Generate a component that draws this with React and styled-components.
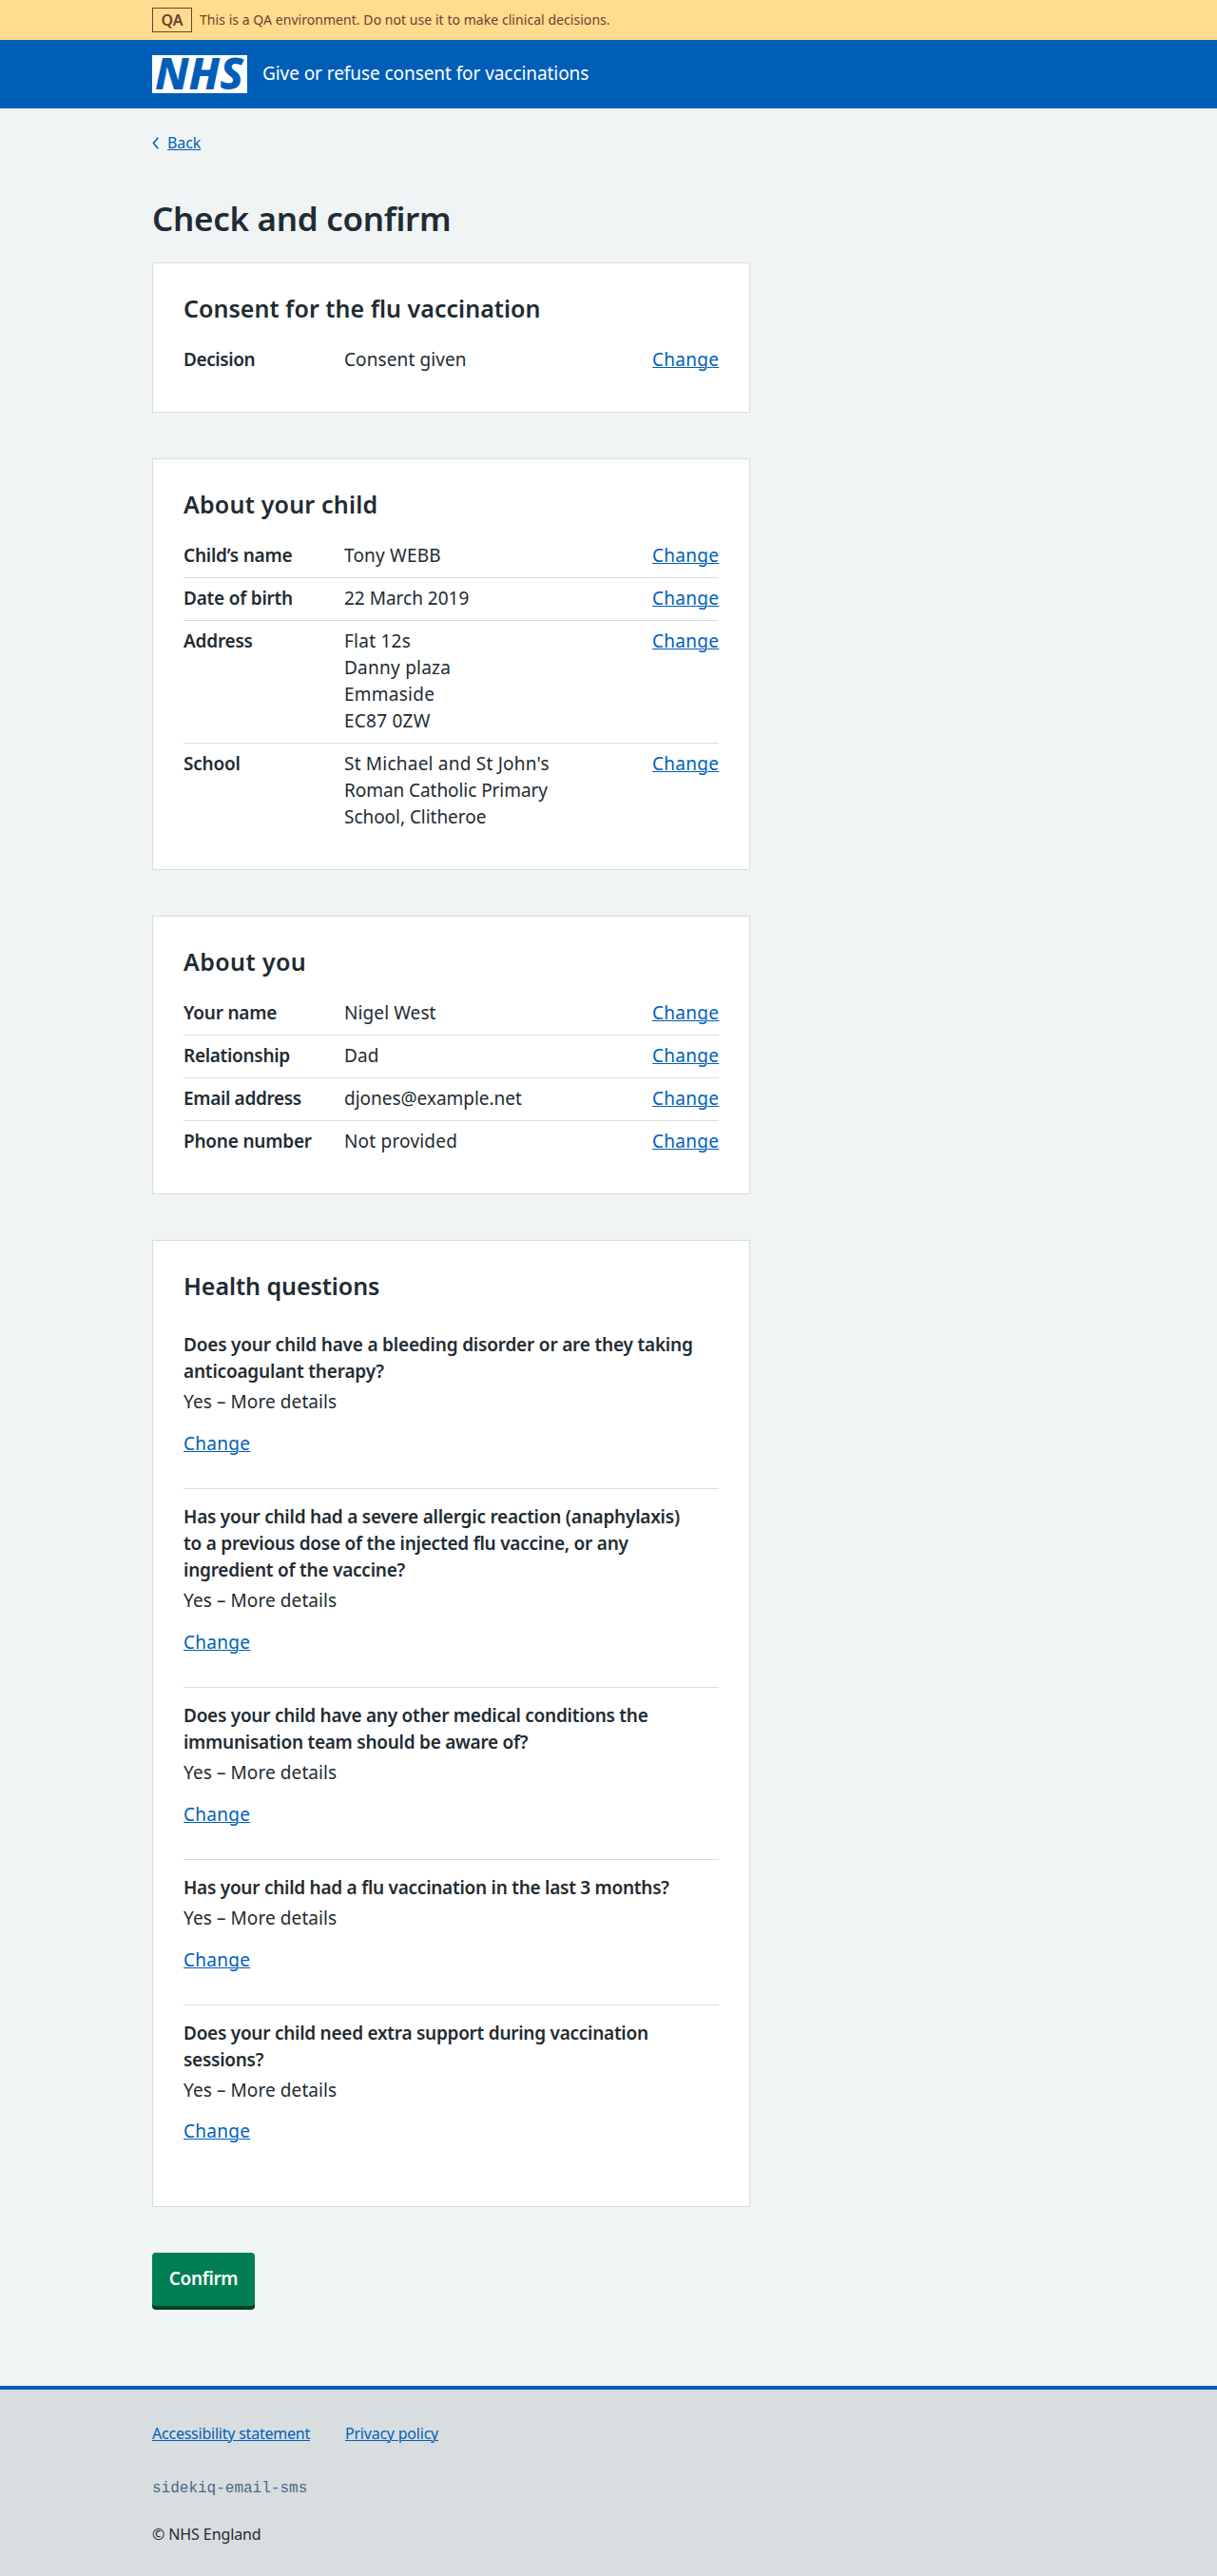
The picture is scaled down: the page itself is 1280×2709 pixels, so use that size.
import React from 'react';
import styled, { createGlobalStyle, css } from 'styled-components';

const color = {
  blue: '#005eb8',
  text: '#212b32',
  secondary: '#4a6785',
  border: '#d8dde0',
  page: '#f0f4f5',
  white: '#ffffff',
  green: '#007f52',
  greenShadow: '#00401e',
  yellow: '#ffdc8e',
  brown: '#6a4032',
};

const GlobalStyle = createGlobalStyle`
  *, *::before, *::after { box-sizing: border-box; }
  body {
    margin: 0;
    background: ${color.page};
    color: ${color.text};
    font-family: 'Noto Sans', 'Open Sans', Arial, sans-serif;
    font-size: 19px;
    line-height: 28px;
  }
  h1, h2, p, dl, dt, dd, ul { margin: 0; padding: 0; }
`;

const tracking = css`
  letter-spacing: ${({ $track = 0 }) => $track}px;
`;

const Container = styled.div`
  width: 960px;
  margin: 0 auto;
`;

const Banner = styled.div`
  height: 42px;
  background: ${color.yellow};
  color: ${color.brown};
`;

const BannerRow = styled(Container)`
  display: flex;
  align-items: center;
  height: 100%;
  gap: 8px;
`;

const Tag = styled.strong`
  width: 42px;
  height: 26px;
  border: 1px solid ${color.brown};
  font-size: 16px;
  font-weight: 600;
  line-height: 24px;
  text-align: center;
`;

const BannerText = styled.span`
  font-size: 14px;
  line-height: 20px;
  letter-spacing: 0.05px;
`;

const Header = styled.header`
  background: ${color.blue};
  color: ${color.white};
`;

const HeaderRow = styled(Container)`
  display: flex;
  align-items: center;
  height: 72px;
  gap: 16px;
`;

const Logo = styled.svg`
  display: block;
  width: 100px;
  height: 40px;
  overflow: visible;
  background: ${color.white};
`;

const LogoText = styled.text`
  fill: ${color.blue};
  font-family: 'Noto Sans', 'Open Sans', Arial, sans-serif;
  font-size: 45.5px;
  font-style: italic;
  font-weight: 800;
`;

const ServiceName = styled.span`
  padding-bottom: 2px;
  letter-spacing: -0.07px;
`;

const Link = styled.a.attrs({ href: '#' })`
  color: ${color.blue};
  text-decoration: underline;
  text-decoration-thickness: 1px;
  text-underline-offset: 1px;
  letter-spacing: ${({ $track = 0.28 }) => $track}px;
`;

const Main = styled.main`
  padding: 24px 0 84px;
`;

const BackRow = styled.div`
  display: flex;
  align-items: center;
  height: 24px;
  gap: 9px;
  font-size: 16px;
  line-height: 24px;
`;

const Chevron = styled.svg`
  display: block;
  width: 7px;
  height: 13px;
`;

const Column = styled.div`
  width: 629.33px;
  padding-top: 44px;
`;

const PageTitle = styled.h1`
  margin-bottom: 22px;
  font-size: 35px;
  font-weight: 600;
  line-height: 48px;
  letter-spacing: -0.3px;
`;

const Card = styled.section`
  margin-bottom: 48px;
  padding: 31px 32px 32px;
  border: 1px solid ${color.border};
  background: ${color.white};
`;

const CardTitle = styled.h2`
  margin-bottom: 17px;
  font-size: 25px;
  font-weight: 600;
  line-height: 32px;
  ${tracking}
`;

const SummaryRow = styled.div`
  display: grid;
  grid-template-columns: 30% 50% 20%;
  padding: 7px 0 9px;
  border-bottom: 1px solid ${color.border};

  &:last-child {
    border-bottom: 0;
  }
`;

const Key = styled.dt`
  font-weight: 600;
  ${tracking}
`;

const Value = styled.dd`
  display: flex;
  flex-direction: column;
`;

const ValueLine = styled.span`
  ${tracking}
`;

const Action = styled.dd`
  display: flex;
  justify-content: flex-end;
`;

const Question = styled.div`
  padding: 15px 24px 33px 0;
  border-bottom: 1px solid ${color.border};

  &:last-child {
    border-bottom: 0;
  }
`;

const QuestionAction = styled.dd`
  margin-top: 16px;

  ${Question}:last-child & {
    margin-top: 15px;
  }
`;

const Answer = styled.dd`
  margin-top: 4px;
  letter-spacing: 0.09px;
`;

const Button = styled.button`
  display: block;
  width: 108px;
  height: 56px;
  margin: 0;
  padding: 13px 0 15px;
  border: 0;
  border-radius: 4px;
  background: ${color.green};
  box-shadow: 0 4px 0 ${color.greenShadow};
  color: ${color.white};
  font: 600 19px/28px 'Noto Sans', 'Open Sans', Arial, sans-serif;
  letter-spacing: -0.35px;
`;

const Footer = styled.footer`
  padding: 34px 0 32px;
  border-top: 4px solid ${color.blue};
  background: ${color.border};
  font-size: 16px;
  line-height: 24px;
`;

const FooterLinks = styled.div`
  display: flex;
  gap: 37px;
  margin-bottom: 34px;
`;

const Version = styled.p`
  margin-bottom: 24px;
  color: ${color.secondary};
  font-family: 'Liberation Mono', monospace;
`;

const Copyright = styled.p`
  letter-spacing: -0.1px;
`;

const summaries = [
  {
    title: 'Consent for the flu vaccination',
    track: 0.03,
    rows: [{ key: 'Decision', keyTrack: -0.4, lines: ['Consent given'] }],
  },
  {
    title: 'About your child',
    track: 0.2,
    rows: [
      { key: 'Child’s name', lines: ['Tony WEBB'], valueTrack: 0.2 },
      { key: 'Date of birth', lines: ['22 March 2019'], valueTrack: 0 },
      { key: 'Address', lines: ['Flat 12s', 'Danny plaza', 'Emmaside', 'EC87 0ZW'], valueTrack: 0.25 },
      {
        key: 'School',
        lines: ["St Michael and St John's", 'Roman Catholic Primary', 'School, Clitheroe'],
        valueTrack: [0.22, -0.06, -0.04],
      },
    ],
  },
  {
    title: 'About you',
    track: 0.4,
    rows: [
      { key: 'Your name', lines: ['Nigel West'] },
      { key: 'Relationship', keyTrack: -0.3, lines: ['Dad'] },
      { key: 'Email address', keyTrack: -0.34, lines: ['djones@example.net'], valueTrack: -0.02 },
      { key: 'Phone number', lines: ['Not provided'], valueTrack: 0.2 },
    ],
  },
];

const questions = [
  { text: 'Does your child have a bleeding disorder or are they taking anticoagulant therapy?', track: -0.19 },
  {
    text: 'Has your child had a severe allergic reaction (anaphylaxis) to a previous dose of the injected flu vaccine, or any ingredient of the vaccine?',
    track: -0.23,
  },
  { text: 'Does your child have any other medical conditions the immunisation team should be aware of?', track: -0.26 },
  { text: 'Has your child had a flu vaccination in the last 3 months?', track: -0.26 },
  { text: 'Does your child need extra support during vaccination sessions?', track: -0.26 },
];

function SummaryCard({ title, track, rows }) {
  return (
    <Card>
      <CardTitle $track={track}>{title}</CardTitle>
      <dl>
        {rows.map(({ key, keyTrack = -0.22, lines, valueTrack = 0.1 }) => (
          <SummaryRow key={key}>
            <Key $track={keyTrack}>{key}</Key>
            <Value>
              {lines.map((line, index) => (
                <ValueLine key={line} $track={Array.isArray(valueTrack) ? valueTrack[index] : valueTrack}>
                  {line}
                </ValueLine>
              ))}
            </Value>
            <Action>
              <Link>Change</Link>
            </Action>
          </SummaryRow>
        ))}
      </dl>
    </Card>
  );
}

export default function App() {
  return (
    <>
      <GlobalStyle />
      <Banner>
        <BannerRow>
          <Tag>QA</Tag>
          <BannerText>This is a QA environment. Do not use it to make clinical decisions.</BannerText>
        </BannerRow>
      </Banner>
      <Header>
        <HeaderRow>
          <Logo viewBox="0 0 100 40" role="img" aria-label="NHS">
            <LogoText x="3" y="36.3" textLength="93" lengthAdjust="spacingAndGlyphs">
              NHS
            </LogoText>
          </Logo>
          <ServiceName>Give or refuse consent for vaccinations</ServiceName>
        </HeaderRow>
      </Header>
      <Main>
        <Container>
          <BackRow>
            <Chevron viewBox="0 0 7 13" aria-hidden="true">
              <path d="M6.3 0.8 L1.4 6.5 L6.3 12.2" fill="none" stroke={color.blue} strokeWidth="1.6" />
            </Chevron>
            <Link $track={-0.1}>Back</Link>
          </BackRow>
          <Column>
            <PageTitle>Check and confirm</PageTitle>
            {summaries.map((card) => (
              <SummaryCard key={card.title} {...card} />
            ))}
            <Card>
              <CardTitle $track={-0.06}>Health questions</CardTitle>
              <dl>
                {questions.map((question) => (
                  <Question key={question.text}>
                    <Key $track={question.track}>{question.text}</Key>
                    <Answer>Yes – More details</Answer>
                    <QuestionAction>
                      <Link>Change</Link>
                    </QuestionAction>
                  </Question>
                ))}
              </dl>
            </Card>
            <Button>Confirm</Button>
          </Column>
        </Container>
      </Main>
      <Footer>
        <Container>
          <FooterLinks>
            <Link $track={-0.23}>Accessibility statement</Link>
            <Link $track={-0.22}>Privacy policy</Link>
          </FooterLinks>
          <Version>sidekiq-email-sms</Version>
          <Copyright>© NHS England</Copyright>
        </Container>
      </Footer>
    </>
  );
}
